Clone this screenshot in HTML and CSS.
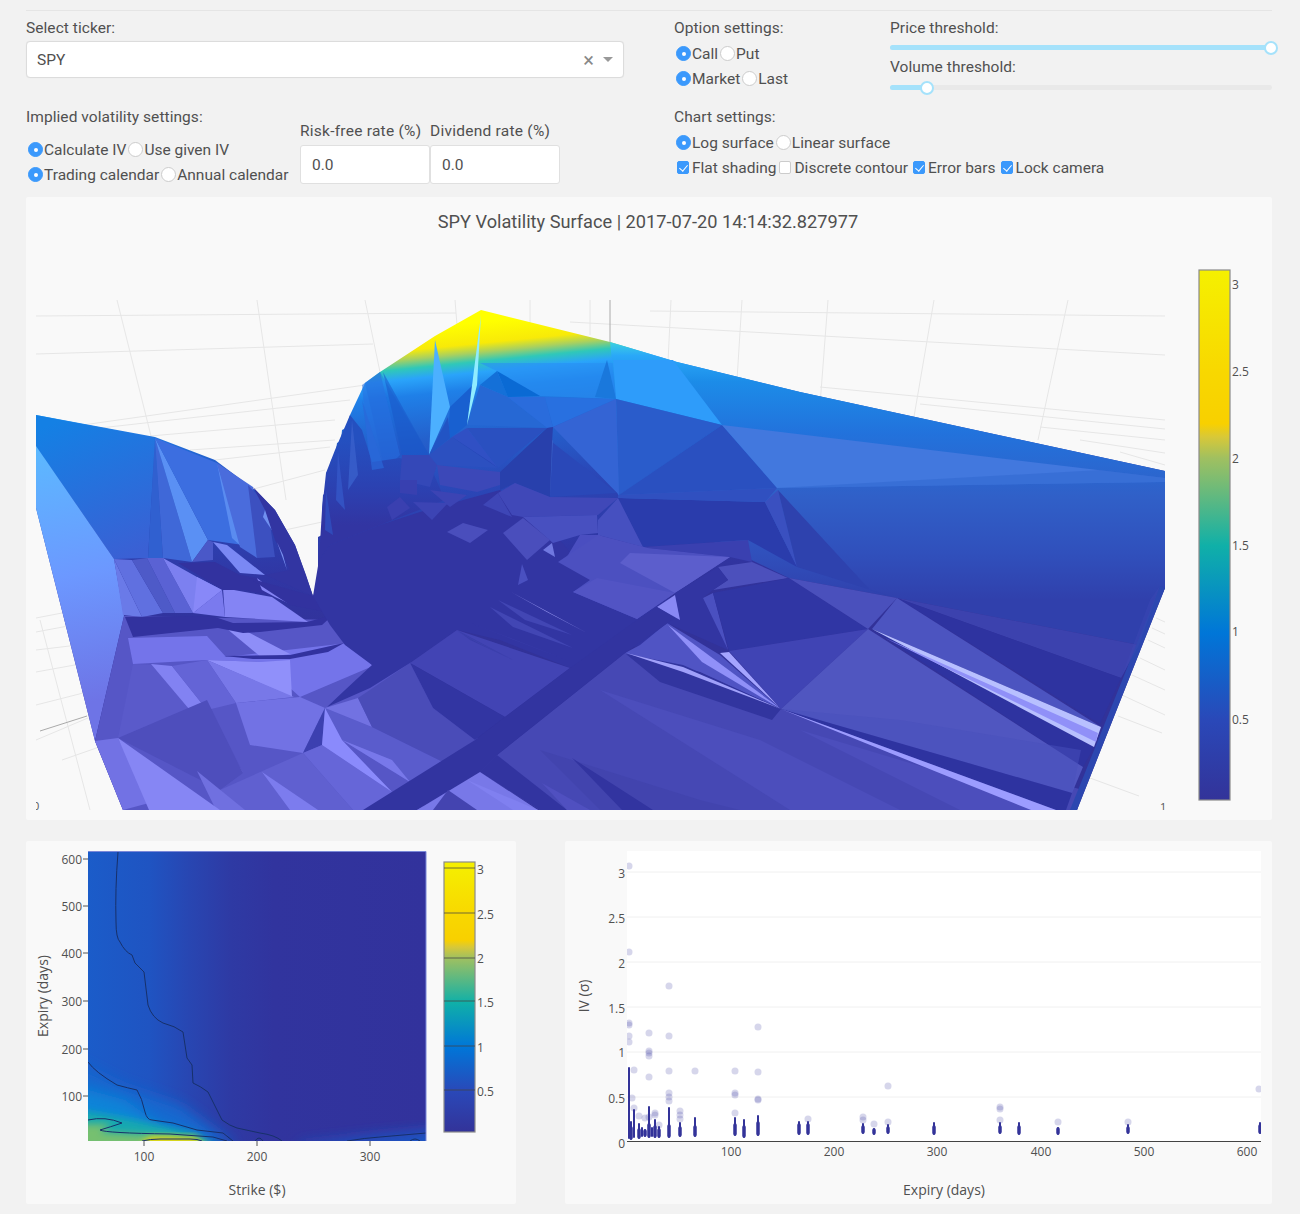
FILE: index.html
```html
<!DOCTYPE html>
<html lang="en">
<head>
<meta charset="utf-8">
<title>SPY Volatility Surface</title>
<link rel="stylesheet" href="styles.css">
</head>
<body>
<main class="page">
  <hr class="rule">
  <section class="controls">
    <div class="col-left">
      <div class="field">
        <div class="label">Select ticker:</div>
        <div class="select"><span class="select-value">SPY</span><span class="select-clear">×</span><span class="select-caret"></span></div>
      </div>
      <div class="iv-row">
        <div class="iv-options">
          <div class="label">Implied volatility settings:</div>
          <div class="opt-rows">
            <div class="opt-row"><label class="opt"><input type="radio" name="iv" checked>Calculate IV</label><label class="opt"><input type="radio" name="iv">Use given IV</label></div>
            <div class="opt-row"><label class="opt"><input type="radio" name="cal" checked>Trading calendar</label><label class="opt"><input type="radio" name="cal">Annual calendar</label></div>
          </div>
        </div>
        <div class="rate"><div class="label">Risk-free rate (%)</div><input class="num" value="0.0"></div>
        <div class="rate"><div class="label">Dividend rate (%)</div><input class="num" value="0.0"></div>
      </div>
    </div>
    <div class="col-right">
      <div class="right-top">
        <div class="option-col">
          <div class="label">Option settings:</div>
          <div class="opt-rows tight">
            <div class="opt-row"><label class="opt"><input type="radio" name="kind" checked>Call</label><label class="opt"><input type="radio" name="kind">Put</label></div>
            <div class="opt-row"><label class="opt"><input type="radio" name="price" checked>Market</label><label class="opt"><input type="radio" name="price">Last</label></div>
          </div>
        </div>
        <div class="slider-col">
          <div class="label">Price threshold:</div>
          <div class="slider"><div class="fill" style="width:100%"></div><span class="thumb" style="left:99.8%"></span></div>
          <div class="label">Volume threshold:</div>
          <div class="slider"><div class="fill" style="width:9.7%"></div><span class="thumb" style="left:9.7%"></span></div>
        </div>
      </div>
      <div class="chart-settings">
        <div class="label">Chart settings:</div>
        <div class="opt-rows tight">
          <div class="opt-row"><label class="opt"><input type="radio" name="scale" checked>Log surface</label><label class="opt"><input type="radio" name="scale">Linear surface</label></div>
          <div class="opt-row"><label class="opt"><input type="checkbox" checked>Flat shading</label><label class="opt"><input type="checkbox">Discrete contour</label><label class="opt wide"><input type="checkbox" checked>Error bars</label><label class="opt wide"><input type="checkbox" checked>Lock camera</label></div>
        </div>
      </div>
    </div>
  </section>

  <section class="card surface-card">
    <svg class="surface-svg" viewBox="26 197 1246 623" role="img" aria-label="Volatility surface">
      <defs>
        <linearGradient id="wall" gradientUnits="userSpaceOnUse" x1="500" y1="320" x2="530" y2="620">
          <stop offset="0" stop-color="#ffff00"/>
          <stop offset=".07" stop-color="#f8ea08"/>
          <stop offset=".1" stop-color="#a8d060"/>
          <stop offset=".13" stop-color="#30c8b8"/>
          <stop offset=".165" stop-color="#2aa4fa"/>
          <stop offset=".22" stop-color="#1f80e8"/>
          <stop offset=".37" stop-color="#2460cc"/>
          <stop offset=".53" stop-color="#2a48b8"/>
          <stop offset=".77" stop-color="#3036a4"/>
          <stop offset="1" stop-color="#323299"/>
        </linearGradient>
        <linearGradient id="fade" gradientUnits="userSpaceOnUse" x1="0" y1="440" x2="0" y2="525">
          <stop offset="0" stop-color="#2450c0"/>
          <stop offset=".6" stop-color="#2c40b0"/>
          <stop offset="1" stop-color="#3235a2"/>
        </linearGradient>
        <linearGradient id="rightWall" gradientUnits="userSpaceOnUse" x1="0" y1="340" x2="0" y2="600">
          <stop offset="0" stop-color="#40d8dc"/>
          <stop offset=".06" stop-color="#2aa8f8"/>
          <stop offset=".16" stop-color="#1c8ce8"/>
          <stop offset=".36" stop-color="#2272dc"/>
          <stop offset=".6" stop-color="#3060c8"/>
          <stop offset=".82" stop-color="#3050bc"/>
          <stop offset="1" stop-color="#3040ac"/>
        </linearGradient>
        <linearGradient id="sideL" gradientUnits="userSpaceOnUse" x1="50" y1="450" x2="100" y2="700">
          <stop offset="0" stop-color="#5cb8ff"/>
          <stop offset=".5" stop-color="#6c98ff"/>
          <stop offset="1" stop-color="#6e74e6"/>
        </linearGradient>
        <linearGradient id="wing" gradientUnits="userSpaceOnUse" x1="60" y1="420" x2="120" y2="560">
          <stop offset="0" stop-color="#1480e4"/>
          <stop offset="1" stop-color="#3a60d4"/>
        </linearGradient>
        <linearGradient id="bar" x1="0" y1="0" x2="0" y2="1">
          <stop offset="0" stop-color="#f5f000"/>
          <stop offset=".19" stop-color="#f8d800"/>
          <stop offset=".29" stop-color="#f8d000"/>
          <stop offset=".315" stop-color="#d8c838"/>
          <stop offset=".355" stop-color="#a0c060"/>
          <stop offset=".52" stop-color="#10b0a8"/>
          <stop offset=".685" stop-color="#0076d8"/>
          <stop offset=".85" stop-color="#2a48b8"/>
          <stop offset="1" stop-color="#333399"/>
        </linearGradient>
        <clipPath id="surfClip"><rect x="36" y="300" width="1129" height="510"/></clipPath>
      </defs>
      <text class="title" x="648" y="228" text-anchor="middle">SPY Volatility Surface | 2017-07-20 14:14:32.827977</text>
      <g clip-path="url(#surfClip)">
        <g class="grid3d">
          <path d="M117 300L152 440M257 300L286 500M365 300L380 372M455 300L457 325M530 300L530 325M590 300L590 335M671 300L668 362M742 300L737 380M828 300L820 405M934 300L910 440M1068 300L1038 440"/>
          <path d="M36 316L456 313M36 354L373 344M650 311L1165 316M570 322L1165 355M83 425L365 385M100 428L350 400M150 436L335 420M190 450L335 440M215 460L330 447M250 490L325 470M285 530L322 522M820 387L1165 420M920 404L1165 429M1040 427L1165 440M1080 440L1165 453M1120 452L1165 465"/>
          <path d="M36 618L62 613M36 632L100 620M36 650L120 640M36 672L130 655M36 705L95 690M36 740L95 715M62 760L105 745M100 665L125 810M40 620L90 810"/>
          <path d="M1156 618L1165 622M1152 628L1165 634M1148 640L1165 648M1140 658L1165 670M1132 675L1165 690M1122 695L1165 715M1118 716L1162 733M1090 778L1139 796"/>
          <path class="axis" d="M610 300V342M40 731L87 716"/>
        </g>
        <path fill="url(#wall)" d="M36 415L155 437L215 460L255 490L275 510L295 545L306 575L313 596L318 587L318 537L322 535L322 510L323 495L326 492L326 473L330 470L331 460L335 458L337 443L341 441L342 430L346 428L350 415L365 383L380 372L435 336L481 310L610 342L677 362L800 392L1165 471V588L1077 810H123L95 741L36 508Z"/>

        <!-- left wing wall -->
        <path fill="url(#wing)" d="M36 415L155 438L148 558L114 559L36 446Z"/>
        <path fill="url(#sideL)" d="M36 446L114 559L124 616L95 741L36 508Z"/>
        <path fill="#3060d0" d="M155 438L148 558H163Z"/>
        <path fill="#3f68d8" d="M155 438L163 558L192 562Z"/>
        <path fill="#5a90f4" d="M155 438L208 540L192 562Z"/>
        <path fill="#3c6ee0" d="M155 438L217 463L243 545L208 540Z"/>
        <path fill="#5a8cf0" d="M217 463L243 548L232 538Z"/>
        <path fill="#4a6cdc" d="M217 463L253 487L257 558L240 547Z"/>
        <path fill="#4a58c8" d="M208 540L192 562L213 560L213 542Z"/>
        <path fill="#3c50c0" d="M248 485L257 558L275 557L267 505Z"/>
        <path fill="#7090f0" d="M263 517L280 542L267 503Z"/>
        <path fill="#3235a2" d="M253 487L275 510L295 545L313 596L265 575L290 570L275 540L265 510Z"/>
        <path fill="#7a90f0" d="M277 542L287 570L283 555Z"/>
        <path fill="#7a88f4" d="M213 542L240 573L265 575L227 545Z"/>

        <!-- left floor -->
        <path fill="#5656c6" d="M95 741L124 616L340 620L410 662L480 740L420 810H123Z"/>
        <path fill="#6a7ae8" d="M114 559L142 617L123 615Z"/>
        <path fill="#6070e0" d="M114 559L132 560L163 613L142 617Z"/>
        <path fill="#4e5ac8" d="M132 560L147 558L175 613L163 613Z"/>
        <path fill="#5a62d4" d="M147 558L163 558L193 613L175 613Z"/>
        <path fill="#7c80f0" d="M163 558L197 577L222 590L193 613Z"/>
        <path fill="#8888f8" d="M197 577L222 590L193 613Z"/>
        <path fill="#7a7aee" d="M222 590L193 613L225 617Z"/>
        <path fill="#8484f4" d="M223 588L272 597L308 622L225 617Z"/>
        <path fill="#32329f" d="M178 563L215 562L240 575L257 578L275 597L245 590L223 590Z"/>
        <path fill="#8484f4" d="M257 578L290 604L275 597L262 590Z"/>
        <path fill="#32329f" d="M249 578L313 596L332 613L290 605Z"/>
        <path fill="#7474ea" d="M128 638L207 636L226 657L348 643L373 666L300 697L261 662L207 660L133 664Z"/>
        <path fill="#8e8ef8" d="M226 628L248 632L290 654L262 658Z"/>
        <path fill="#9090fa" d="M207 660L292 697L290 660L261 662Z"/>
        <path fill="#7878e8" d="M207 660L236 703L294 697Z"/>
        <path fill="#5a5aca" d="M133 664L118 738L207 736L172 666Z"/>
        <path fill="#8282f2" d="M151 664L243 773L207 710L172 666Z"/>
        <path fill="#6464d6" d="M207 660L172 666L207 710L236 703Z"/>
        <path fill="#4e4ebc" d="M118 738L207 700L243 773L220 790Z"/>
        <path fill="#7272e4" d="M236 703L300 697L325 708L303 753L250 745Z"/>
        <path fill="#3c40b0" d="M325 708L303 753L322 745Z"/>
        <path fill="#5a5ccc" d="M325 708L372 727L443 762L410 782L342 740Z"/>
        <path fill="#7878ea" d="M342 740L392 760L410 782Z"/>
        <path fill="#7272e2" d="M325 708L358 698L372 727Z"/>
        <path fill="#6666d8" d="M303 753L322 745L392 792L410 782L420 810H353Z"/>
        <path fill="#8a8afc" d="M325 708L322 745L392 792L342 740Z"/>
        <path fill="#4a4cb8" d="M358 698L410 663L433 708L475 740L443 762L372 727Z"/>
        <path fill="#6060d0" d="M220 790L303 753L353 810H220Z"/>
        <path fill="#7070e0" d="M197 771L245 810H216Z"/>
        <path fill="#7c7cee" d="M262 772L318 810H290Z"/>
        <path fill="#7272e4" d="M95 741L118 738L149 803L123 810Z"/>
        <path fill="#8686f4" d="M118 738L220 810H149Z"/>
        <path fill="#32329f" d="M125 617L212 616L233 623L307 622L333 615L322 625L260 632L243 633L218 628L133 637Z"/>
        <path fill="#32329f" d="M224 656L290 655L344 643L328 652L290 659L253 659Z"/>

        <!-- top of the central wall -->
        <path fill="url(#rightWall)" d="M610 342L677 362L800 392L1165 471V588L1139 645L897 598L789 578L618 496L616 399Z"/>
        <path fill="#1650c8" opacity=".25" d="M365 383L380 372L429 455L402 455L385 470Z"/>
        <path fill="#1a58c8" opacity=".55" d="M383 372L429 455L402 455Z"/>
        <path fill="#2870e0" opacity=".55" d="M362 385L380 372L400 455L385 470L370 470Z"/>
        <path fill="url(#fade)" d="M319 560L322 510L326 473L335 450L350 415L362 430L372 462L400 458L432 470L445 500L380 525L330 545Z"/>
        <path fill="#3a60cc" opacity=".8" d="M352 420L358 475L348 490Z"/>
        <path fill="#3458c8" opacity=".8" d="M338 452L345 510L336 500Z"/>
        <path fill="#3050c0" opacity=".8" d="M326 490L333 535L325 530Z"/>
        <path fill="#2a68d8" opacity=".7" d="M362 400L384 468L372 470Z"/>
        <path fill="#4cb0ff" d="M435 340L450 407L429 455Z"/>
        <path fill="#1860d0" d="M450 407L473 385L467 425L448 440Z"/>
        <path fill="#2254c4" d="M429 455L450 438L448 417Z"/>
        <path fill="#2890f4" opacity=".6" d="M480 363L613 363L616 399L540 396L497 371Z"/>
        <path fill="#1a78dc" d="M595 397L607 360L616 399Z"/>
        <path fill="#2e9cfa" d="M613 360L616 399L722 425L673 360Z"/>
        <path fill="#1470d8" d="M480 385L497 371L508 397Z"/>
        <path fill="#0a6ad4" d="M497 371L508 397L540 396Z"/>
        <path fill="#2668d4" d="M480 385L467 425L547 428L508 397Z"/>
        <path fill="#2a6cdc" d="M508 397L545 397L553 427L547 428Z"/>
        <path fill="#2870e0" d="M545 397L616 399L553 427Z"/>
        <path fill="#90ecff" d="M481 315L467 425L477 385Z"/>
        <path fill="#2a5ccb" d="M616 399L722 425L619 495Z"/>
        <path fill="#2a50c0" d="M722 425L777 488L619 495Z"/>
        <path fill="#3464d4" d="M553 427L616 399L619 495Z"/>
        <path fill="#2a48b8" d="M552 442L617 493L550 497Z"/>
        <path fill="#3a60c8" d="M547 443L553 440L550 497Z"/>
        <path fill="#2840ac" d="M500 472L547 428L553 427L552 442L550 497L515 483L500 490Z"/>
        <path fill="#2a50c0" d="M467 428L547 428L498 468Z"/>
        <path fill="#3050c4" d="M467 428L452 437L498 468Z"/>
        <path fill="#2644b4" d="M452 437L490 462L498 468L470 452Z"/>
        <path fill="#2c50c0" d="M429 455L452 437L498 468L437 465Z"/>
        <path fill="#3c48b8" d="M437 465L500 472V485L477 492L440 485Z"/>
        <path fill="#3448b8" d="M402 455L429 455L437 465L430 487L400 480Z"/>
        <!-- top band and large right facets -->
        <path fill="#4278de" d="M722 425L1165 478V482L777 488Z"/>
        <path fill="#3268d0" opacity=".55" d="M1165 478L1165 482L777 488L1100 470Z"/>
        <path fill="#2a3cac" d="M618 498L765 502L797 567L748 540L643 547Z"/>
        <path fill="#3050c0" d="M618 495L777 488L765 502L618 498Z"/>
        <path fill="#3a50c0" d="M765 502L778 490L797 567Z"/>
        <path fill="#2e42ae" d="M778 490L870 590L897 598L797 567Z"/>
        <path fill="#3a40b0" d="M643 547L748 540L752 562L730 557L648 548Z"/>

        <!-- central dark -->
        <path fill="#3235a2" d="M319 560L330 545L380 525L420 512L445 505L500 490L560 540L600 590L680 600V618L640 645L570 668L500 640L457 630L410 663L370 688L327 707L345 690L372 665L345 645L330 625L313 596Z"/>
        <path fill="#3840b0" d="M400 480L417 480L417 495L400 493Z"/>
        <path fill="#3a40b0" d="M387 507L400 497L410 508L392 520Z"/>
        <path fill="#3c44b4" d="M413 502L432 520L448 503Z"/>
        <path fill="#3c44b4" d="M430 490L467 495L450 507Z"/>
        <path fill="#4048b8" d="M515 483L550 497L618 498L598 515L523 517L512 515L498 493Z"/>
        <path fill="#3e46b6" d="M483 505L498 493L512 517Z"/>
        <path fill="#4850c0" d="M523 517L597 515L598 533L580 535L553 543Z"/>
        <path fill="#4650c0" d="M618 498L643 547L598 535L598 520Z"/>
        <path fill="#4a4ebc" d="M523 518L550 540L527 560L503 533Z"/>
        <path fill="#4a4ebc" d="M447 532L463 523L488 530L470 543Z"/>
        <path fill="#7078e0" d="M543 550L552 543L555 557Z"/>
        <path fill="#4a50c0" d="M518 585L522 564L528 580Z"/>
        <path fill="#4a4ec0" d="M580 535L600 535L618 562L565 560Z"/>
        <path fill="#4c50c0" d="M598 535L648 548L730 557L675 593L637 619L573 592L590 580L558 562Z"/>
        <path fill="#5254c4" d="M573 592L597 578L675 593L637 619Z"/>
        <path fill="#5c5ecc" d="M630 553L730 557L675 593L620 563Z"/>

        <!-- middle floor -->
        <path fill="#4244b4" d="M410 663L457 630L570 668L505 717Z"/>
        <path fill="#3235a2" d="M410 663L505 717L475 740L433 708Z"/>
        <path fill="#3a3eaa" d="M457 630L513 660L470 640Z"/>
        <path fill="#4246b4" d="M498 600L572 635L525 620Z"/>
        <path fill="#4246b4" d="M490 607L573 648L513 627Z"/>
        <path fill="#4246b4" d="M468 622L567 660L507 637Z"/>
        <path fill="#3e42ae" d="M455 630L513 660L480 644Z"/>
        <path fill="#a0a0f8" d="M511 592L587 633L547 612Z"/>

        <!-- right floor -->
        <path fill="#4648b4" d="M650 660L781 709L1083 790L1077 810H540L480 772L497 755L625 653Z"/>
        <path fill="#4c4ebc" d="M600 690L760 740L900 810H790Z"/>
        <path fill="#4244ae" d="M540 750L700 800L740 810H600Z"/>
        <path fill="#4c4ebc" d="M800 730L1000 790L1040 810H960Z"/>
        <path fill="#4c50bc" d="M718 567L752 562L788 578L713 590L728 580Z"/>
        <path fill="#3235a2" d="M675 593L718 567L728 580L713 590L703 598L728 650L667 623Z"/>
        <path fill="#4a50c0" d="M703 598L713 593L728 650Z"/>
        <path fill="#3036a4" d="M713 593L789 578L868 629L729 651Z"/>
        <path fill="#4044b4" d="M729 651L868 629L781 709Z"/>
        <path fill="#4a50bc" d="M789 578L897 598L868 629Z"/>
        <path fill="#8888f4" d="M675 595L680 620L657 607Z"/>
        <path fill="#5054c4" d="M640 645L667 623L720 655L781 709L700 672L650 660L625 653Z"/>
        <path fill="#9090f8" d="M668 625L702 662L781 709Z"/>
        <path fill="#a4a4ff" d="M720 653L729 652L779 707Z"/>
        <path fill="#32359f" d="M626 654L660 682L772 720L781 709L683 665Z"/>
        <path fill="#a0a0fa" d="M626 653L683 667L781 709L683 672Z"/>

        <path fill="#3c42ae" d="M897 598L1139 645L1121 678Z"/>
        <path fill="#2e33a0" d="M897 598L1121 678L1100 724Z"/>
        <path fill="#4c54c0" d="M872 629L897 598L1101 727Z"/>
        <path fill="#2e33a0" d="M872 629L1094 747L1083 767Z"/>
        <path fill="#5056c0" d="M868 629L781 709L1072 793L1083 767Z"/>
        <path fill="#4850bc" d="M781 709L1072 793L1081 750L900 720Z" opacity=".5"/>
        <path fill="#b8c0ff" d="M872 629L1101 727L1094 747Z"/>
        <path fill="#9090f8" d="M885 638L1098 733L1096 742Z"/>
        <path fill="#2e33a0" d="M781 709L1072 793L1066 810H1056Z"/>
        <path fill="#9c9cff" d="M781 709L1056 810H1031Z"/>
        <path fill="#2c47b0" d="M1165 588L1160 586L1070 810H1077Z"/>
        <path fill="#404ab8" d="M1160 586L1139 645L1121 678L1150 600Z" opacity=".35"/>

        <!-- bands -->
        <path fill="#3234a0" d="M363 810L475 740L505 717L570 668L637 620L657 607L675 618L625 653L497 755L480 772L417 810Z"/>
        <path fill="#3234a0" d="M497 755L567 810H540L480 772Z"/>
        <path fill="#7878e8" d="M480 772L538 810H417Z"/>
        <path fill="#4444b0" d="M448 790L477 810H433Z"/>
        <path fill="#8080f0" d="M467 780L538 810H513Z"/>
        <path fill="#5050c0" d="M542 783L590 810H567Z"/>
        <path fill="#3234a0" d="M572 758L653 810H622Z"/>
      </g>
      <g clip-path="url(#surfClip)" class="tick3d">
        <text x="33" y="810">0</text>
        <text x="1160" y="811">1</text>
      </g>
      <rect class="cbar" x="1199" y="270" width="31" height="530" fill="url(#bar)"/>
      <g class="tick">
        <text x="1232" y="289">3</text>
        <text x="1232" y="376">2.5</text>
        <text x="1232" y="463">2</text>
        <text x="1232" y="550">1.5</text>
        <text x="1232" y="636">1</text>
        <text x="1232" y="724">0.5</text>
      </g>
    </svg>
  </section>

  <section class="bottom">
    <div class="card">
      <svg class="contour-svg" viewBox="26 841 490 363" role="img" aria-label="Contour chart">
        <defs>
          <linearGradient id="heatBase" gradientUnits="userSpaceOnUse" x1="88" y1="0" x2="426" y2="0">
            <stop offset="0" stop-color="#1b5cc9"/>
            <stop offset=".18" stop-color="#1f54c2"/>
            <stop offset=".3" stop-color="#2846b2"/>
            <stop offset=".42" stop-color="#2e3aa4"/>
            <stop offset=".55" stop-color="#31349e"/>
            <stop offset="1" stop-color="#32329c"/>
          </linearGradient>
          <linearGradient id="bar2" x1="0" y1="0" x2="0" y2="1">
            <stop offset="0" stop-color="#f5f000"/>
            <stop offset=".19" stop-color="#f8d800"/>
            <stop offset=".29" stop-color="#f8d000"/>
            <stop offset=".315" stop-color="#d8c838"/>
            <stop offset=".355" stop-color="#a0c060"/>
            <stop offset=".52" stop-color="#10b0a8"/>
            <stop offset=".685" stop-color="#0076d8"/>
            <stop offset=".85" stop-color="#2a48b8"/>
            <stop offset="1" stop-color="#333399"/>
          </linearGradient>
          <filter id="blur6" x="-30%" y="-50%" width="160%" height="200%"><feGaussianBlur stdDeviation="7"/></filter>
          <filter id="blur3" x="-30%" y="-50%" width="160%" height="200%"><feGaussianBlur stdDeviation="3.5"/></filter>
          <clipPath id="heatClip"><rect x="88" y="851" width="338" height="290"/></clipPath>
        </defs>
        <g clip-path="url(#heatClip)">
          <rect x="88" y="851" width="338" height="290" fill="url(#heatBase)"/>
          <path fill="#1868cf" filter="url(#blur6)" d="M70 1060L120 1085L180 1105L235 1145L70 1150Z"/>
          <path fill="#0c84d8" filter="url(#blur6)" d="M70 1085L125 1100L160 1125L210 1145H70Z"/>
          <path fill="#14a8b0" filter="url(#blur3)" d="M80 1110L125 1118L195 1133L220 1148H80Z"/>
          <path fill="#76c070" filter="url(#blur3)" d="M80 1124L112 1124L100 1132L170 1136L215 1148H80Z"/>
          <path fill="#f8dc00" filter="url(#blur3)" d="M140 1146L150 1137H195L206 1146Z"/>
          <path fill="#1c58c8" filter="url(#blur6)" d="M300 1145L380 1136L440 1130V1150H300Z"/>
          <g class="contours">
            <path d="M118 852Q115 890 116 922Q116 938 120 942Q125 952 132 955L135 963L144 972L148 1005Q152 1018 163 1023Q175 1026 183 1032L187 1058L192 1065L193 1083Q200 1086 208 1092L222 1120Q230 1126 237 1128L260 1133Q275 1135 282 1141"/>
            <path d="M88 1062Q95 1072 117 1085Q128 1088 137 1090Q142 1098 145 1112Q147 1120 152 1120L173 1123L197 1130L223 1133L233 1141"/>
            <path d="M88 1120Q105 1116 122 1123Q110 1127 100 1130Q105 1133 170 1134L213 1137L227 1141"/>
            <path d="M142 1141Q150 1139 160 1139H190Q198 1139 202 1141"/>
            <path d="M347 1141Q365 1138 380 1137L426 1133"/>
            <path d="M255 1141Q259 1135 263 1141M410 1141Q415 1137 420 1141"/>
          </g>
        </g>
        <path class="plot-edge" d="M88 851.5H426V1141"/>
        <g class="ticklines">
          <path d="M83 859H88M83 906H88M83 953H88M83 1001H88M83 1049H88M83 1096H88M144 1141V1146M257 1141V1146M370 1141V1146"/>
        </g>
        <g class="tick end">
          <text x="82" y="864">600</text>
          <text x="82" y="911">500</text>
          <text x="82" y="958">400</text>
          <text x="82" y="1006">300</text>
          <text x="82" y="1054">200</text>
          <text x="82" y="1101">100</text>
        </g>
        <g class="tick mid">
          <text x="144" y="1161">100</text>
          <text x="257" y="1161">200</text>
          <text x="370" y="1161">300</text>
        </g>
        <text class="axis-title" x="257" y="1195" text-anchor="middle">Strike ($)</text>
        <text class="axis-title" transform="translate(48 996) rotate(-90)" text-anchor="middle">Expiry (days)</text>
        <rect class="cbar" x="444" y="862" width="31" height="270" fill="url(#bar2)"/>
        <path class="cbar-lines" d="M444 868H475M444 913H475M444 958H475M444 1001H475M444 1046H475M444 1090H475"/>
        <g class="tick">
          <text x="477" y="874">3</text>
          <text x="477" y="919">2.5</text>
          <text x="477" y="963">2</text>
          <text x="477" y="1007">1.5</text>
          <text x="477" y="1052">1</text>
          <text x="477" y="1096">0.5</text>
        </g>
      </svg>
    </div>
    <div class="card">
      <svg class="scatter-svg" viewBox="565 841 707 363" role="img" aria-label="Scatter chart">
        <defs><clipPath id="scatClip"><rect x="627" y="851" width="634" height="290"/></clipPath></defs>
        <rect x="627" y="851" width="634" height="290" fill="#fff"/>
        <path class="gridline" d="M627 872H1261M627 917H1261M627 962H1261M627 1007H1261M627 1052H1261M627 1097H1261"/>
        <g clip-path="url(#scatClip)">
          <g class="dots">
            <circle cx="629" cy="866" r="3"/><circle cx="629" cy="952" r="3"/><circle cx="669" cy="986" r="3"/><circle cx="629" cy="1023" r="3"/><circle cx="629" cy="1025" r="3"/><circle cx="629" cy="1036" r="3"/><circle cx="629" cy="1042" r="3"/><circle cx="649" cy="1033" r="3"/><circle cx="669" cy="1036" r="3"/><circle cx="758" cy="1027" r="3"/><circle cx="649" cy="1051" r="3"/><circle cx="649" cy="1053" r="3"/><circle cx="649" cy="1056" r="3"/><circle cx="634" cy="1070" r="3"/><circle cx="669" cy="1071" r="3"/><circle cx="695" cy="1071" r="3"/><circle cx="735" cy="1071" r="3"/><circle cx="758" cy="1072" r="3"/><circle cx="649" cy="1077" r="3"/><circle cx="632" cy="1098" r="3"/><circle cx="669" cy="1093" r="3"/><circle cx="669" cy="1097" r="3"/><circle cx="669" cy="1101" r="3"/><circle cx="735" cy="1093" r="3"/><circle cx="735" cy="1095" r="3"/><circle cx="758" cy="1099" r="3"/><circle cx="758" cy="1100" r="3"/><circle cx="634" cy="1108" r="3"/><circle cx="639" cy="1116" r="3"/><circle cx="645" cy="1118" r="3"/><circle cx="655" cy="1113" r="3"/><circle cx="655" cy="1115" r="3"/><circle cx="649" cy="1117" r="3"/><circle cx="680" cy="1111" r="3"/><circle cx="680" cy="1115" r="3"/><circle cx="680" cy="1119" r="3"/><circle cx="735" cy="1113" r="3"/><circle cx="808" cy="1119" r="3"/><circle cx="863" cy="1117" r="3"/><circle cx="863" cy="1120" r="3"/><circle cx="874" cy="1124" r="3"/><circle cx="888" cy="1086" r="3"/><circle cx="888" cy="1122" r="3"/><circle cx="659" cy="1125" r="3"/><circle cx="1000" cy="1107" r="3"/><circle cx="1000" cy="1109" r="3"/><circle cx="1000" cy="1120" r="3"/><circle cx="1058" cy="1122" r="3"/><circle cx="1128" cy="1122" r="3"/><circle cx="1259" cy="1089" r="3"/>
          </g>
          <path class="bars-thin" d="M629 1068V1138M634 1110V1137M631 1122V1139M639 1124V1138M642 1128V1136M645 1130V1136M649 1107V1137M652 1128V1136M655 1120V1137M659 1127V1137M669 1108V1137M680 1123V1136M695 1118V1136M735 1118V1135M744 1120V1137M758 1116V1135M799 1122V1134M808 1122V1134M863 1124V1133M874 1129V1134M888 1125V1133M934 1123V1134M1000 1123V1133M1019 1123V1134M1058 1128V1134M1128 1125V1133M1260 1123V1133"/>
          <path class="bars-thick" d="M631 1128V1138M639 1130V1137M645 1131V1135M649 1125V1136M655 1127V1136M659 1130V1136M669 1126V1136M680 1128V1135M695 1127V1135M735 1125V1134M744 1127V1136M758 1123V1134M799 1125V1133M808 1125V1133M863 1127V1132M874 1130V1133M888 1128V1132M934 1127V1133M1000 1127V1132M1019 1127V1133M1058 1129V1133M1128 1128V1132M1260 1126V1132"/>
        </g>
        <path class="baseline" d="M627 1141.5H1261"/>
        <g class="tick end">
          <text x="625" y="878">3</text>
          <text x="625" y="923">2.5</text>
          <text x="625" y="968">2</text>
          <text x="625" y="1013">1.5</text>
          <text x="625" y="1057">1</text>
          <text x="625" y="1103">0.5</text>
          <text x="625" y="1148">0</text>
        </g>
        <g class="tick mid">
          <text x="731" y="1156">100</text>
          <text x="834" y="1156">200</text>
          <text x="937" y="1156">300</text>
          <text x="1041" y="1156">400</text>
          <text x="1144" y="1156">500</text>
          <text x="1247" y="1156">600</text>
        </g>
        <text class="axis-title" x="944" y="1195" text-anchor="middle">Expiry (days)</text>
        <text class="axis-title" transform="translate(589 996) rotate(-90)" text-anchor="middle">IV (σ)</text>
      </svg>
    </div>
  </section>
</main>
</body>
</html>
```
FILE: styles.css
```css
* { box-sizing: border-box; }
html, body { margin: 0; padding: 0; }
body {
  background: #f2f2f2;
  color: #505050;
  font-family: Roboto, "Noto Sans", "Liberation Sans", sans-serif;
  font-size: 15.5px;
}
.page { padding: 10px 28px 10px 26px; }
.rule { border: 0; height: 1px; background: #e5e5e5; margin: 0 0 7px; }
.label { height: 20px; line-height: 20px; white-space: nowrap; letter-spacing: .06px; }

.controls { display: grid; grid-template-columns: 648px 1fr; height: 179px; }
.select {
  display: flex; align-items: center;
  width: 598px; height: 37px; margin-top: 3px; padding: 0 10px 0 10px;
  background: #fff; border: 1px solid #dcdcdc; border-radius: 4px;
  box-shadow: 0 0 1px rgba(0,0,0,.08);
}
.select-value { flex: 1; }
.select-clear { font-size: 20px; color: #888; line-height: 1; margin-right: 9px; }
.select-caret { width: 0; height: 0; border: 5px solid transparent; border-top-color: #999; border-bottom: 0; }

.iv-row { display: flex; align-items: flex-start; margin-top: 29px; }
.iv-options { width: 274px; flex: none; }
.opt-rows { margin-top: 10px; }
.opt-rows.tight { margin-top: 3px; }
.opt-row { display: flex; height: 25px; align-items: center; }
.opt { display: flex; align-items: center; white-space: nowrap; }
.opt.wide { margin-left: 2px; }
.opt input {
  appearance: none; -webkit-appearance: none;
  position: relative; flex: none;
  width: 15px; height: 15px; margin: 0 1px 0 2px;
  background: #fff; border: 1px solid #ccc; border-radius: 50%;
}
.opt input[type=radio]:checked { background: #3b99fc; border-color: #3b99fc; }
.opt input[type=radio]:checked::after {
  content: ""; position: absolute; left: 4.5px; top: 4.5px;
  width: 4px; height: 4px; border-radius: 50%; background: #fff;
}
.opt input[type=checkbox] { width: 12px; height: 13px; margin: 0 3px 0 3px; border-radius: 2px; }
.opt input[type=checkbox]:checked { background: #3b99fc; border-color: #3b99fc; }
.opt input[type=checkbox]:checked::after {
  content: ""; position: absolute; left: 3px; top: 1px;
  width: 4px; height: 7px; border: solid #fff; border-width: 0 1.5px 1.5px 0; transform: rotate(40deg);
}

.rate { width: 130px; flex: none; margin-top: 14px; }
.rate .label { letter-spacing: .25px; }
.num {
  display: block; width: 130px; height: 39px; margin-top: 4px; padding: 0 11px;
  font: inherit; color: inherit;
  background: #fff; border: 1px solid #e0e0e0; border-radius: 3px; outline: none;
}

.right-top { display: flex; height: 89px; }
.option-col { width: 216px; flex: none; }
.slider-col { flex: 1; }
.slider { position: relative; height: 5px; margin: 7px 0; background: #e9e9e9; border-radius: 3px; }
.slider .fill { height: 100%; background: #a5e2fb; border-radius: 3px; }
.slider .thumb {
  position: absolute; top: -4.5px; width: 14px; height: 14px; margin-left: -7px;
  background: #fff; border: 2px solid #a5e2fb; border-radius: 50%;
}
.slider + .label + .slider { margin-top: 8px; }
.chart-settings { margin-top: 0; }

.card { background: #f9f9f9; border-radius: 2px; }
.surface-card { height: 623px; }
.surface-svg { display: block; width: 1246px; height: 623px; }
.bottom { display: grid; grid-template-columns: 490px 707px; column-gap: 49px; margin-top: 21px; }
.contour-svg { display: block; width: 490px; height: 363px; }
.scatter-svg { display: block; width: 707px; height: 363px; }

.title { font-family: Roboto, "Noto Sans", sans-serif; font-size: 18.2px; fill: #505050; }
.grid3d path { fill: none; stroke: #e6e6e6; stroke-width: 1; }
.grid3d .axis { stroke: #aaa; }
.tick3d text { font-family: "Open Sans", sans-serif; font-size: 11px; fill: #555; }
.tick text { font-family: "Open Sans", sans-serif; font-size: 12px; fill: #505050; }
.tick.end text { text-anchor: end; }
.tick.mid text { text-anchor: middle; }
.axis-title { font-family: "Open Sans", sans-serif; font-size: 14px; fill: #505050; }
.cbar { stroke: #8a8a8a; stroke-width: 1.2; }
.cbar-lines { stroke: #444; stroke-opacity: .75; stroke-width: 1; fill: none; }
.contours path { fill: none; stroke: #17306a; stroke-width: 1; stroke-linejoin: round; }
.plot-edge { fill: none; stroke: #7a88d8; stroke-width: 1; }
.ticklines path { stroke: #555; stroke-width: 1; fill: none; }
.gridline { stroke: #f0f0f0; stroke-width: 1; fill: none; }
.dots circle { fill: #333399; fill-opacity: .2; r: 3.5px; }
.bars-thin { stroke: #333399; stroke-width: 2; stroke-linecap: round; fill: none; }
.bars-thick { stroke: #333399; stroke-width: 3.5; stroke-linecap: round; fill: none; }
.baseline { stroke: #444; stroke-width: 1; fill: none; }
```
